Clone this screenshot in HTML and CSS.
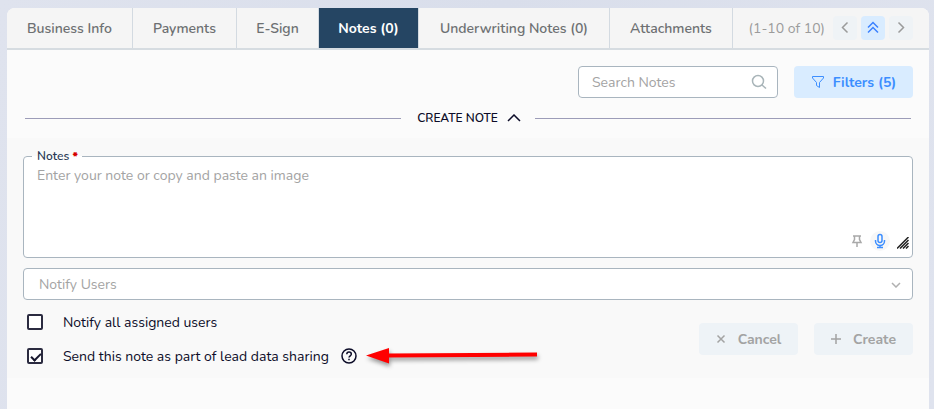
FILE: index.html
```
<!DOCTYPE html>
<html lang="en">
<head>
    <meta charset="UTF-8">
    <meta name="viewport" content="width=device-width, initial-scale=1.0">
    <title>Notes</title>
    <link rel="stylesheet" href="styles.css">
</head>
<body>

    <main class="card">
        <nav class="tabs">
            <a href="#business">Business Info</a>
            <a href="#payments">Payments</a>
            <a href="#esign">E-Sign</a>
            <a href="#notes" class="active">Notes (0)</a>
            <a href="#underwriting">Underwriting Notes (0)</a>
            <a href="#attachments">Attachments</a>
            <div class="pager">
                <span>(1-10 of 10)</span>
                <button type="button" aria-label="Previous">
                    <svg width="24" height="24" viewBox="0 0 24 24"><path d="M14.500 6.500L9.500 11.500L14.500 16.500"/></svg>
                </button>
                <button type="button" class="top" aria-label="Back to top">
                    <svg width="24" height="24" viewBox="0 0 24 24"><path d="M7 11.500L12 6.500L17 11.500M7 16.500L12 11.500L17 16.500"/></svg>
                </button>
                <button type="button" aria-label="Next">
                    <svg width="24" height="24" viewBox="0 0 24 24"><path d="M9.500 6.500L14.500 11.500L9.500 16.500"/></svg>
                </button>
            </div>
        </nav>

        <div class="toolbar">
            <div class="search">
                <input type="text" placeholder="Search Notes" aria-label="Search Notes">
                <svg width="16" height="16" viewBox="0 0 16 16"><circle cx="7" cy="7" r="5.500"/><path d="M11 11L15 14.500"/></svg>
            </div>
            <button type="button" class="btn filters">
                <svg width="14" height="14" viewBox="0 0 14 14"><path d="M1.500 1.500H12.500V3L8.500 7.500V12.500L5.500 10.500V7.500L1.500 3Z"/></svg>
                Filters (5)
            </button>
        </div>

        <button type="button" class="divider">
            <span>CREATE NOTE</span>
            <svg width="14" height="8" viewBox="0 0 14 8"><path d="M1 7L7 1L13 7"/></svg>
        </button>

        <form class="note-form">
            <fieldset class="note-box">
                <legend><label for="note">Notes</label> <b>*</b></legend>
                <textarea id="note" placeholder="Enter your note or copy and paste an image"></textarea>
                <div class="note-tools">
                    <button type="button" aria-label="Pin note">
                        <svg width="20" height="20" viewBox="0 0 20 20"><path d="M6 5H14M7.500 5V8.500L6 11.500H14L12.500 8.500V5M10 12V16"/></svg>
                    </button>
                    <button type="button" class="mic" aria-label="Dictate note">
                        <svg width="20" height="20" viewBox="0 0 20 20"><rect x="8" y="3.500" width="4" height="8" rx="2"/><path d="M5.500 9V10A4.500 4.500 0 0 0 14.500 10V9M10 14.500V16.500M7 16.500H13"/></svg>
                    </button>
                    <svg class="grip" width="12" height="12" viewBox="0 0 12 12"><path d="M0 11.500L11.500 0M3 11.500L11.500 3M6 11.500L11.500 6M9 11.500L11.500 9"/></svg>
                </div>
            </fieldset>

            <div class="notify">
                <select aria-label="Notify Users">
                    <option>Notify Users</option>
                </select>
                <svg width="10" height="6" viewBox="0 0 10 6"><path d="M1 1L5 5L9 1"/></svg>
            </div>

            <div class="form-footer">
                <div class="checks">
                    <label><input type="checkbox"> Notify all assigned users</label>
                    <div class="share">
                        <label><input type="checkbox" checked> Send this note as part of lead data sharing</label>
                        <svg class="help" width="16" height="16" viewBox="0 0 16 16"><circle cx="8" cy="8" r="7"/><path d="M5.800 6.300C5.800 3.300 10.300 3.400 10.300 6.200C10.300 7.800 8 7.800 8 9.600M8 10.800V12.300"/></svg>
                        <svg class="arrow" width="180" height="24" viewBox="0 0 180 24"><path d="M3 11.500L26 4V9.500L174 8.500V12.500L26 13.500V19.500Z"/></svg>
                    </div>
                </div>
                <div class="actions">
                    <button type="button" class="btn" disabled>
                        <svg width="10" height="10" viewBox="0 0 10 10"><path d="M1.500 1.500L8.500 8.500M8.500 1.500L1.500 8.500"/></svg>
                        Cancel
                    </button>
                    <button type="submit" class="btn" disabled>
                        <svg width="10" height="10" viewBox="0 0 10 10"><path d="M5 0V10M0 5H10"/></svg>
                        Create
                    </button>
                </div>
            </div>
        </form>
    </main>

</body>
</html>
```
FILE: styles.css
```
* {
    box-sizing: border-box;
}
body {
    margin: 0;
    padding: 8px 5px 0 7px;
    min-height: 100vh;
    display: flex;
    background: linear-gradient(100deg, #dfe3ee, #d9deeb 50%, #dfe3ee);
    font-family: Nunito, "Open Sans", sans-serif;
    font-size: 14px;
    color: #0c0c28;
}
button, input, select, textarea {
    font: inherit;
}
button {
    border: none;
    padding: 0;
    background: none;
    color: inherit;
    cursor: pointer;
}
svg {
    display: block;
    fill: none;
    stroke: currentColor;
}
.card {
    flex: 1;
    min-width: 0;
    background: #fbfbfb;
    border-radius: 8px 8px 0 0;
    overflow: hidden;
}
.tabs {
    display: grid;
    grid-template-columns: 126px 104px 82px 100px 191px 123px 1fr;
    height: 42px;
    background: #f5f5f5;
    border-bottom: 2px solid #d6dce1;
}
.tabs a {
    display: flex;
    align-items: center;
    justify-content: center;
    border-right: 1px solid #d3dae1;
    color: #6d7072;
    font-weight: 600;
    text-decoration: none;
    white-space: nowrap;
}
.tabs a.active {
    background: #254563;
    color: #fff;
    font-weight: 700;
}
.pager {
    display: flex;
    align-items: center;
    justify-content: flex-end;
    gap: 4px;
    padding-right: 16px;
    color: #9b9b9b;
    white-space: nowrap;
}
.pager span {
    margin-right: 4px;
}
.pager button {
    width: 24px;
    height: 24px;
    border-radius: 4px;
    background: #eff3f6;
}
.pager svg {
    stroke-width: 1.5;
}
.pager .top {
    background: #d9ecff;
    color: #3c82ff;
}
.toolbar {
    display: flex;
    justify-content: flex-end;
    gap: 16px;
    padding: 16px 16px 0;
}
.search {
    position: relative;
    width: 200px;
}
.search input {
    width: 100%;
    height: 32px;
    padding: 0 32px 0 13px;
    border: 1px solid #a9b5bf;
    border-radius: 4px;
    background: #fff;
}
.search svg {
    position: absolute;
    right: 11px;
    top: 8px;
    color: #a9b5b9;
    stroke-width: 1.5;
}
::placeholder {
    color: #a3a3a3;
    opacity: 1;
}
.btn {
    display: flex;
    align-items: center;
    justify-content: center;
    gap: 12px;
    width: 99px;
    height: 32px;
    border-radius: 4px;
    background: #eef3f7;
    color: #a3a3a3;
    font-weight: 700;
}
.btn svg {
    stroke-width: 1.5;
}
.filters {
    gap: 8px;
    width: 119px;
    background: #d9ecff;
    color: #3c8eff;
}
.filters svg {
    stroke-width: 1;
}
.divider {
    display: flex;
    align-items: center;
    width: 100%;
    height: 16px;
    margin: 12px 0;
    padding: 0 18px;
    font-size: 12px;
    font-weight: 600;
}
.divider::before, .divider::after {
    content: "";
    flex: 1;
    height: 1px;
    background: #9c9cb8;
}
.divider span {
    margin: 0 9px 0 16px;
}
.divider svg {
    margin-right: 14px;
    stroke-width: 1.5;
}
.note-form {
    padding: 11px 16px 10px;
    background: #f9f9f9;
}
.note-box {
    position: relative;
    min-width: 0;
    height: 109px;
    margin: 0;
    padding: 0 1px;
    border: 1px solid #a9b5bf;
    border-radius: 4px;
    background: #fff;
}
.note-box legend {
    margin-left: 7px;
    padding: 0 4px 0 5px;
    font-size: 12px;
    font-weight: 600;
    line-height: 14px;
    color: #2b3a55;
}
.note-box b {
    color: #d60000;
}
.note-box textarea {
    display: block;
    width: 100%;
    height: 92px;
    padding: 3px 12px;
    border: none;
    outline: none;
    resize: none;
    background: none;
}
.note-tools {
    position: absolute;
    right: 3px;
    bottom: 6px;
    display: flex;
    align-items: center;
    gap: 3px;
    color: #a9a9a9;
    stroke-width: 1.5;
}
.note-tools .mic {
    border-radius: 50%;
    background: #f7f7f7;
    color: #3c8eff;
}
.note-tools .grip {
    margin: 4px 0 0 4px;
    color: #222;
}
.notify {
    position: relative;
    margin-top: 10px;
}
.notify select {
    appearance: none;
    display: block;
    width: 100%;
    height: 32px;
    padding: 0 32px 0 15px;
    border: 1px solid #a9b5bf;
    border-radius: 4px;
    background: #fff;
    color: #a3a3a3;
}
.notify svg {
    position: absolute;
    right: 12px;
    top: 14px;
    color: #b0b0b0;
    stroke-width: 1.5;
    pointer-events: none;
}
.form-footer {
    display: flex;
    align-items: center;
    justify-content: space-between;
    padding-top: 10px;
}
.checks {
    display: grid;
    gap: 10px;
}
.checks label {
    display: flex;
    align-items: center;
    gap: 20px;
    height: 24px;
    padding-left: 4px;
    white-space: nowrap;
}
.checks input {
    appearance: none;
    position: relative;
    width: 16px;
    height: 16px;
    margin: 0;
    border: 2px solid #2b2b40;
    border-radius: 2px;
    background: #fff;
}
.checks input:checked::after {
    content: "";
    position: absolute;
    left: 4px;
    top: 1px;
    width: 4px;
    height: 8px;
    border: solid #17172e;
    border-width: 0 2px 2px 0;
    transform: rotate(45deg);
}
.share {
    position: relative;
    display: flex;
    align-items: center;
    gap: 12px;
}
.help {
    stroke-width: 1.5;
}
.arrow {
    position: absolute;
    left: 100%;
    top: 0;
    margin-left: 6px;
    fill: #f00;
    stroke: none;
    filter: drop-shadow(1px 3px 2px rgba(0, 0, 0, 0.4));
}
.actions {
    display: flex;
    gap: 16px;
}
```
